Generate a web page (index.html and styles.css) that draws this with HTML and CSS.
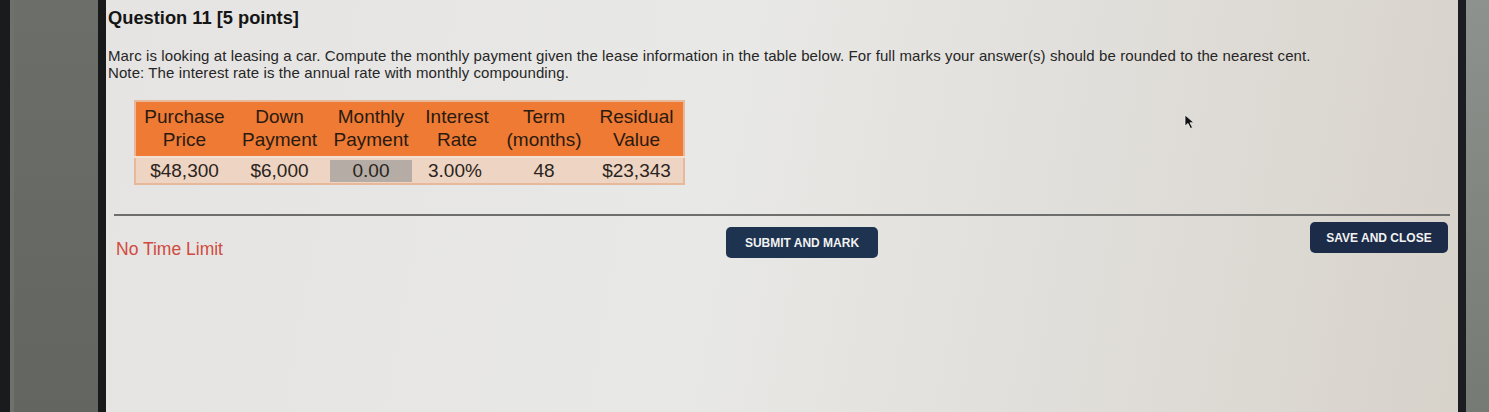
FILE: index.html
```html
<!DOCTYPE html>
<html>
<head>
<meta charset="utf-8">
<link rel="stylesheet" href="styles.css">
</head>
<body>
<div class="frame">
  <div class="bezel-left">
    <div class="edge-dark"></div>
    <div class="edge-line"></div>
    <div class="edge-grey"></div>
    <div class="edge-border"></div>
  </div>
  <div class="screen">
    <h1 class="title">Question 11 [5 points]</h1>
    <p class="prompt">Marc is looking at leasing a car. Compute the monthly payment given the lease information in the table below. For full marks your answer(s) should be rounded to the nearest cent.<br>Note: The interest rate is the annual rate with monthly compounding.</p>
    <table class="lease">
      <thead>
        <tr>
          <th class="c1">Purchase<br>Price</th>
          <th class="c2">Down<br>Payment</th>
          <th class="c3">Monthly<br>Payment</th>
          <th class="c4">Interest<br>Rate</th>
          <th class="c5">Term<br>(months)</th>
          <th class="c6">Residual<br>Value</th>
        </tr>
      </thead>
      <tbody>
        <tr>
          <td>$48,300</td>
          <td>$6,000</td>
          <td class="input-cell"><span class="input">0.00</span></td>
          <td class="left">3.00%</td>
          <td>48</td>
          <td>$23,343</td>
        </tr>
      </tbody>
    </table>
    <hr class="divider">
    <div class="footer">
      <div class="time">No Time Limit</div>
      <button class="btn submit">SUBMIT AND MARK</button>
      <button class="btn save">SAVE AND CLOSE</button>
    </div>
    <svg class="cursor" width="12" height="16" viewBox="0 0 12 16"><path d="M1 1 L1 12 L4 9.5 L6.5 14.5 L8.5 13.5 L6 8.8 L10 8.8 Z" fill="#111" stroke="#eee" stroke-width="0.8"/></svg>
  </div>
  <div class="bezel-right">
    <div class="edge-border-r"></div>
    <div class="edge-grey-r"></div>
  </div>
</div>
</body>
</html>
```
FILE: styles.css
```css
html, body {
  margin: 0;
  padding: 0;
  width: 1489px;
  height: 412px;
  overflow: hidden;
  background: #3a3c3a;
}
.frame {
  display: flex;
  width: 1489px;
  height: 412px;
}
.bezel-left {
  display: flex;
  flex: 0 0 106px;
}
.edge-dark { flex: 0 0 10px; background: #1a1b1c; }
.edge-line { flex: 0 0 4px; background: #6e716d; }
.edge-grey { flex: 1; background: linear-gradient(180deg, #6c6e69 0%, #626560 100%); }
.edge-border { flex: 0 0 8px; background: #17191b; }
.bezel-right {
  display: flex;
  flex: 0 0 31px;
}
.edge-border-r { flex: 0 0 8px; background: #1b1d22; }
.edge-grey-r { flex: 1; background: linear-gradient(180deg, #8e928e 0%, #767a74 100%); }
.screen {
  position: relative;
  flex: 1;
  background: linear-gradient(100deg, #e5e4e2 0%, #e8e8e6 45%, #dedbd6 80%, #d7d2ca 100%);
  font-family: "Liberation Sans", Arial, sans-serif;
  color: #1e1e1e;
  padding: 0 0 0 2px;
  overflow: hidden;
}
.title {
  margin: 7px 0 0 0;
  font-size: 18.3px;
  font-weight: bold;
  line-height: 22px;
  color: #151515;
}
.prompt {
  margin: 18px 0 0 0;
  font-size: 15px;
  line-height: 17px;
  color: #262626;
  letter-spacing: 0.1px;
}
.lease {
  margin: 19px 0 0 26px;
  border-collapse: collapse;
  font-size: 19px;
  border: 2px solid #e8b89a;
  background: #eed4c2;
}
.lease th {
  background: #ee7a34;
  font-weight: normal;
  color: #2a1a10;
  padding: 3px 0 5px 0;
  line-height: 23px;
  text-align: center;
}
.lease .c1 { width: 97px; }
.lease .c2 { width: 93px; }
.lease .c3 { width: 90px; }
.lease .c4 { width: 82px; }
.lease .c5 { width: 92px; }
.lease .c6 { width: 93px; }
.lease td {
  text-align: center;
  color: #2a2420;
  padding: 2px 0 1px 0;
  line-height: 22px;
  border-top: 2px solid #f3e0d2;
}
.lease td.left { text-align: left; padding-left: 12px; }
.lease td.input-cell { padding: 2px 4px 1px 4px; }
.input {
  display: block;
  background: #b4aca5;
  line-height: 22px;
}
.divider {
  margin: 29px 8px 0 6px;
  border: 0;
  height: 2px;
  background: #6e6e6c;
}
.footer {
  position: relative;
  height: 60px;
}
.time {
  position: absolute;
  left: 8px;
  top: 23px;
  font-size: 17.5px;
  color: #d04a40;
}
.btn {
  position: absolute;
  border: 0;
  border-radius: 5px;
  background: #1e3350;
  color: #f2f2f2;
  font-family: "Liberation Sans", Arial, sans-serif;
  font-weight: bold;
  font-size: 12px;
  letter-spacing: 0;
  padding: 0;
  text-align: center;
}
.submit { left: 618px; top: 11px; width: 152px; height: 31px; }
.save { left: 1202px; top: 6px; width: 138px; height: 31px; background: #1c2b48; }
.cursor {
  position: absolute;
  left: 1078px;
  top: 114px;
}
```
